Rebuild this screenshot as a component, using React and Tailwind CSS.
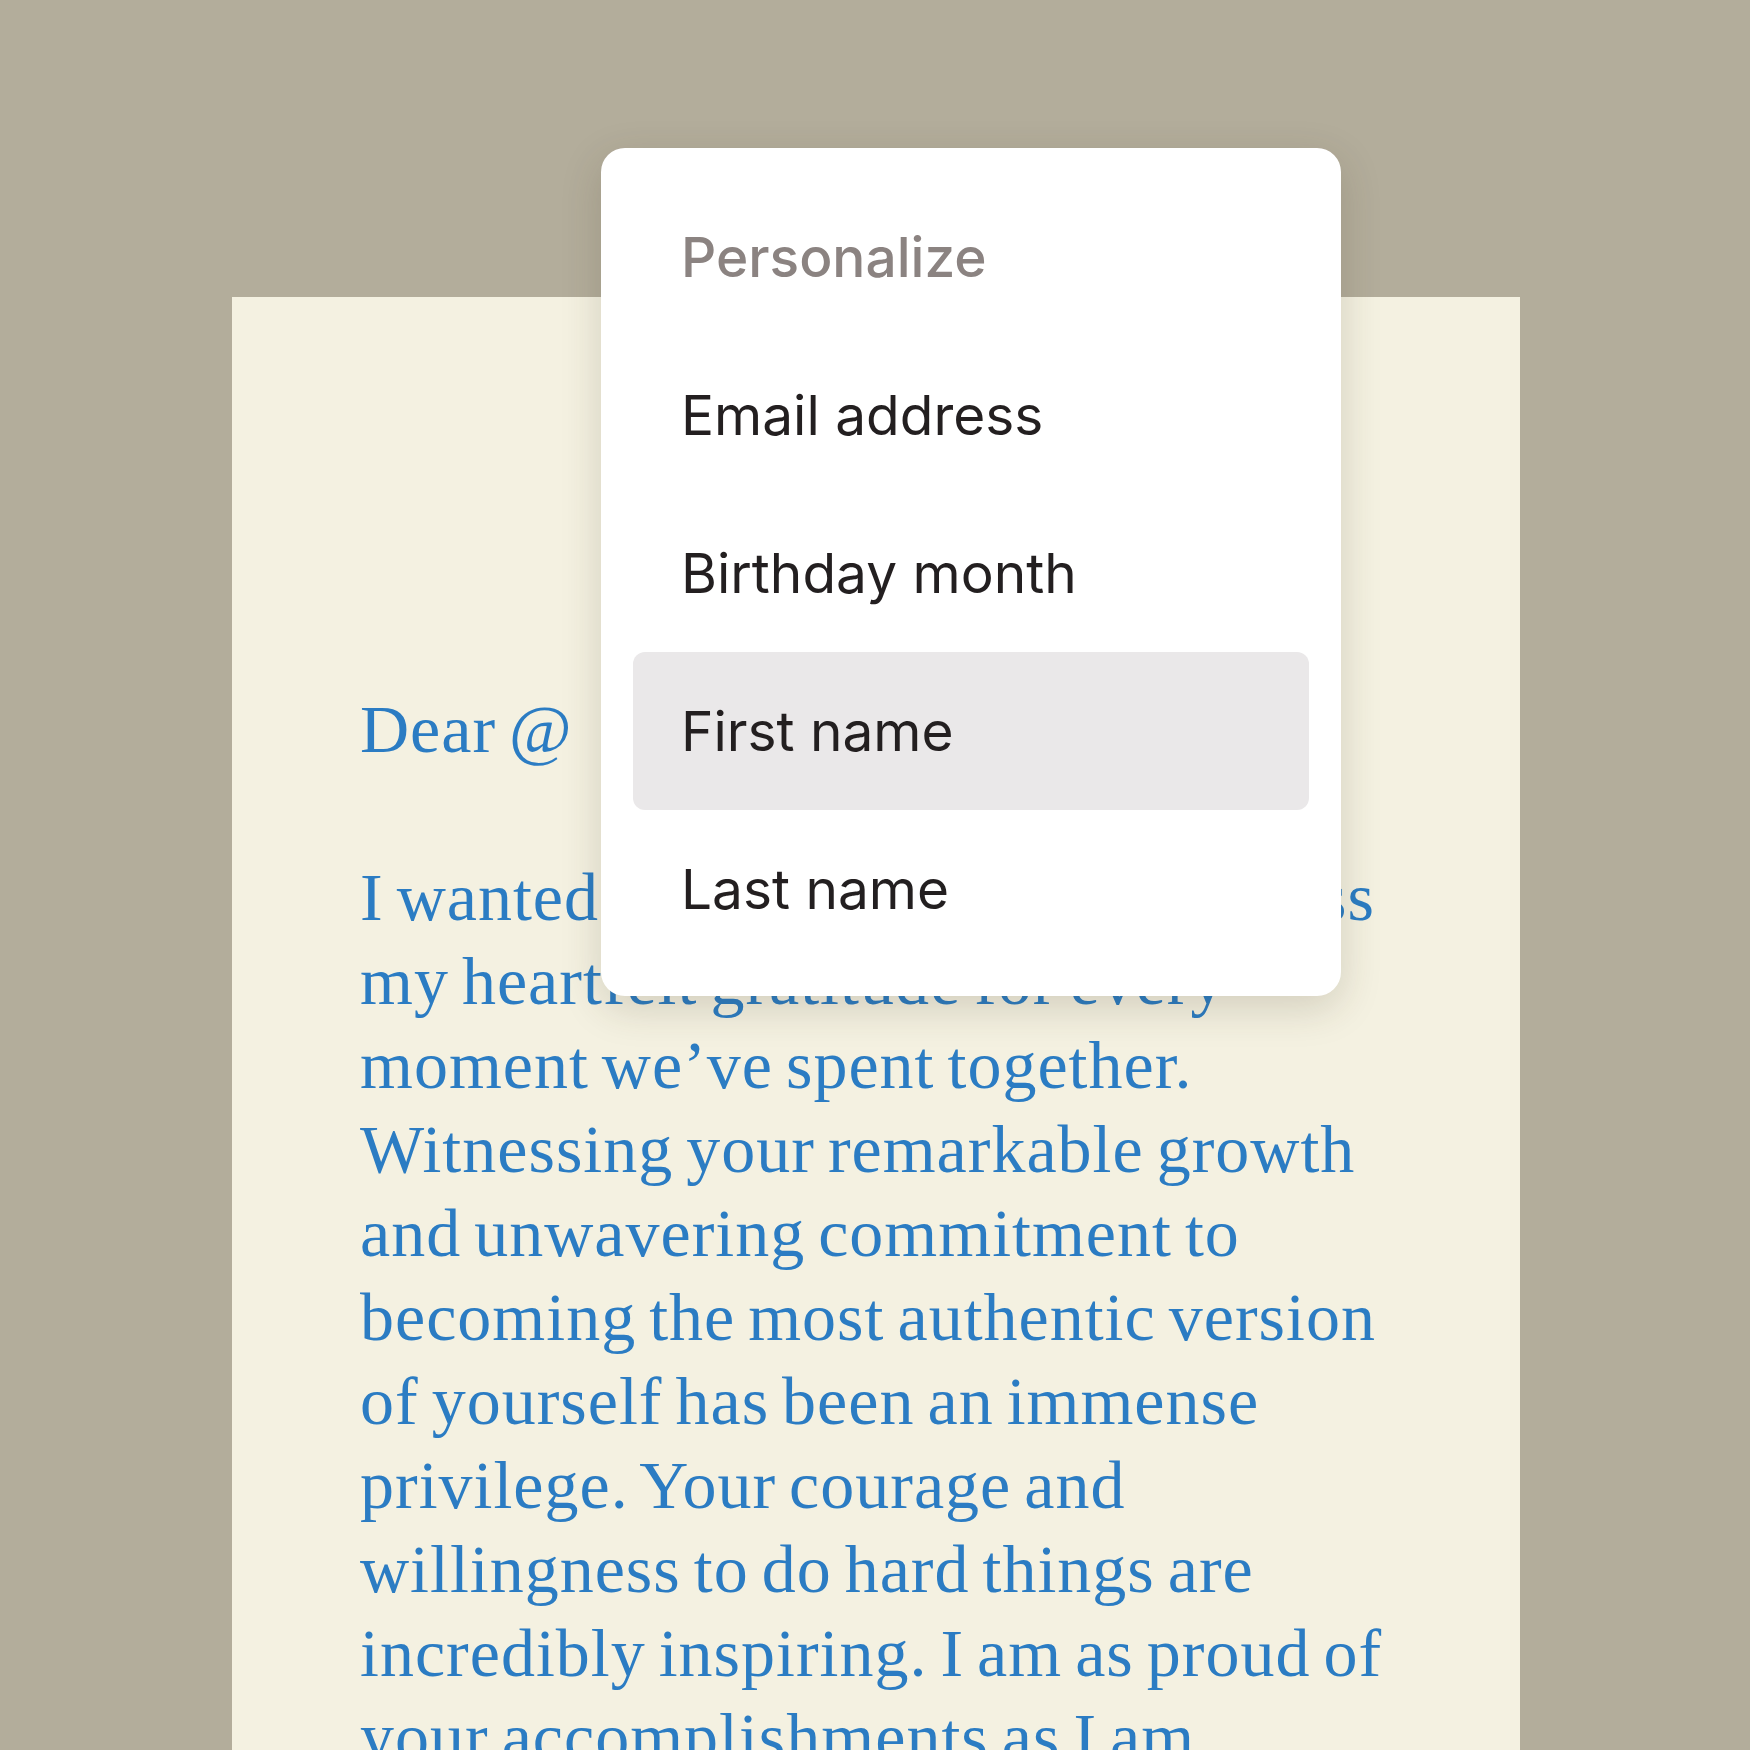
import React from "react";

const items = ["Email address", "Birthday month", "First name", "Last name"];

const letter = [
  "I wanted to take a moment to express",
  "my heartfelt gratitude for every",
  "moment we\u2019ve spent together.",
  "Witnessing your remarkable growth",
  "and unwavering commitment to",
  "becoming the most authentic version",
  "of yourself has been an immense",
  "privilege. Your courage and",
  "willingness to do hard things are",
  "incredibly inspiring. I am as proud of",
  "your accomplishments as I am",
];

export default function App() {
  const active = "First name";

  return (
    <div className="relative w-[1750px] h-[1750px] overflow-hidden bg-[#b3ad9b] pt-[297px] pl-[232px] pr-[230px]">
      {/* Letter */}
      <div
        className="h-full bg-[#f4f1e1] pt-[390px] px-[128px] text-[68px] leading-[84px] tracking-[1px] [word-spacing:-5px] text-[#2b7cc3]"
        style={{ fontFamily: '"Liberation Serif", "Times New Roman", serif' }}
      >
        <p className="mb-[84px] whitespace-nowrap">Dear @</p>
        <p>
          {letter.map((line, idx) => (
            <span key={idx} className="block whitespace-nowrap">
              {line}
            </span>
          ))}
        </p>
      </div>

      {/* Personalize menu */}
      <div
        className="absolute left-[601px] top-[148px] w-[740px] rounded-[24px] bg-white px-8 pt-[30px] pb-[28px] shadow-[0_12px_40px_rgba(60,50,30,0.18)]"
        style={{ fontFamily: 'Inter, "Liberation Sans", sans-serif' }}
      >
        <div className="flex h-[158px] items-center pl-12 text-[55px] leading-none font-medium text-[#8b8381]">
          Personalize
        </div>
        {items.map((item) => (
          <div
            key={item}
            className={`flex h-[158px] items-center rounded-[12px] pl-12 text-[55px] leading-none text-[#231f20] ${
              item === active ? "bg-[#eae8e9]" : ""
            }`}
          >
            {item}
          </div>
        ))}
      </div>
    </div>
  );
}
